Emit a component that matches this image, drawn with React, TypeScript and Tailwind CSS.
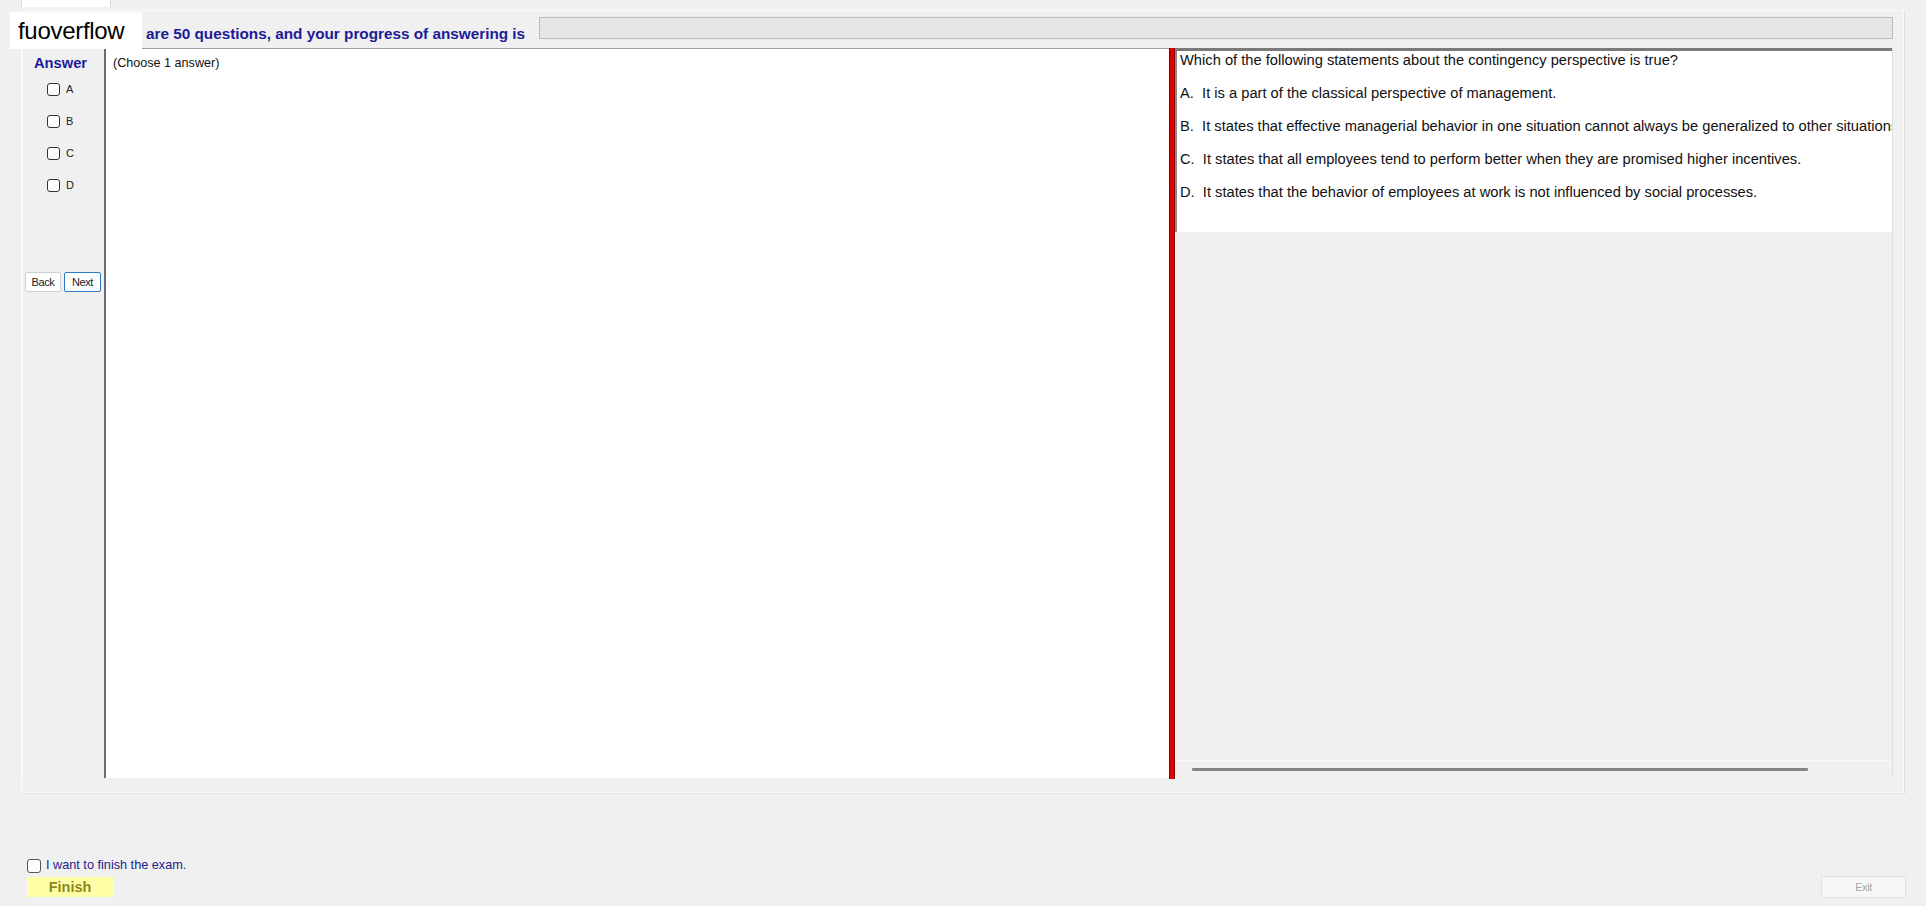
import React from "react";

const options = [
  "It is a part of the classical perspective of management.",
  "It states that effective managerial behavior in one situation cannot always be generalized to other situations.",
  "It states that all employees tend to perform better when they are promised higher incentives.",
  "It states that the behavior of employees at work is not influenced by social processes.",
];

const letters = ["A", "B", "C", "D"];

const Box: React.FC<{ className?: string }> = ({ className }) => (
  <span
    className={
      "inline-block w-[13px] h-[13px] rounded-[3px] border border-[#333] bg-white " +
      (className ?? "")
    }
  />
);

export default function App() {
  return (
    <div
      className="relative w-[1926px] h-[906px] overflow-hidden bg-[#f0f0f0] text-black"
      style={{ fontFamily: '"Liberation Sans", Arial, sans-serif' }}
    >
      {/* tab strip */}
      <div className="flex h-[10px]">
        <div className="ml-[21px] w-[90px] h-[7px] bg-white border-x border-[#dcdcdc]" />
      </div>

      {/* main frame */}
      <div className="ml-[21px] w-[1883px] h-[783px] border border-[#fafafa] shadow-[1px_1px_0_#e0e0e0] flex flex-col">
        <div className="h-[37px] flex items-start">
          <span className="ml-[124px] mt-[14px] text-[15.3px] leading-[17px] font-bold text-[#1c1c96]">
            are 50 questions, and your progress of answering is
          </span>
          <div className="ml-[14px] mr-[10px] mt-[6px] flex-1 h-[22px] bg-[#e6e6e6] border border-[#bcbcbc]" />
        </div>

        <div className="flex h-[730px]">
          {/* answer column */}
          <div className="w-[82px] flex flex-col border-l border-[#fafafa]">
            <div className="pl-[11px] pt-[7px] text-[14.7px] leading-[17px] font-bold text-[#1a1a9a]">Answer</div>
            <div className="flex flex-col gap-[19px] mt-[11px] pl-[24px]">
              {letters.map((l) => (
                <label key={l} className="flex items-center gap-[6px] text-[11px] text-[#222] h-[13px]">
                  <Box />
                  {l}
                </label>
              ))}
            </div>
            <div className="flex gap-[3px] mt-[80px] pl-[2px]">
              <button className="w-[36px] h-[20px] bg-white border border-[#cfcfcf] rounded-[2px] text-[11px] text-[#222] tracking-[-0.4px]">
                Back
              </button>
              <button className="w-[37px] h-[20px] bg-white border border-[#2a7bc4] rounded-[2px] text-[11px] text-[#222] tracking-[-0.4px]">
                Next
              </button>
            </div>
          </div>

          {/* left white panel */}
          <div className="w-[1065px] h-[730px] bg-white border-l-2 border-t border-[#6e6e6e] border-t-[#a0a0a0]">
            <div className="pl-[7px] pt-[5px] text-[12.6px] text-[#111]">(Choose 1 answer)</div>
          </div>

          {/* splitter */}
          <div className="w-[6px] h-[731px] bg-[#e00000] border-x border-[#8a0000]" />

          {/* right panel */}
          <div className="w-[718px] h-[730px] flex flex-col border-r border-[#e0e0e0]">
            <div className="h-[184px] bg-white border-t-[3px] border-[#7a7a7a] border-l-2 border-l-[#8a8a8a] overflow-hidden whitespace-nowrap pl-[3px] pt-[1px] text-[14.7px] text-[#111]">
              <div className="h-[25px] leading-[16px]">
                Which of the following statements about the contingency perspective is true?
              </div>
              {options.map((o, i) => (
                <div key={i} className="h-[33px] leading-[33px]">
                  {letters[i]}.&nbsp; {o}
                </div>
              ))}
            </div>
            <div className="flex-1 border-l border-[#fafafa]" />
            <div className="h-[18px] flex items-center border-t border-[#fafafa]">
              <div className="ml-[17px] w-[616px] h-[3px] bg-[#858585] rounded-[1px]" />
            </div>
          </div>
        </div>
      </div>

      {/* watermark */}
      <div className="absolute left-[10px] top-[12px] w-[132px] h-[37px] bg-white flex items-center pl-[8px] text-[24px] text-black tracking-[-0.3px]">
        fuoverflow
      </div>

      {/* bottom controls */}
      <div className="absolute left-[27px] top-[856px] flex flex-col gap-[2px]">
        <label className="flex items-center gap-[5px] text-[12.7px] text-[#1c1c8c]">
          <Box className="w-[14px] h-[14px] border-[#555]" />
          I want to finish the exam.
        </label>
        <button className="w-[86px] h-[20px] bg-[#ffffa8] text-[14.5px] font-bold text-[#8a8a1a] leading-[20px]">
          Finish
        </button>
      </div>

      <button className="absolute left-[1821px] top-[876px] w-[85px] h-[22px] bg-[#f6f6f6] border border-[#e2e2e2] text-[11px] text-[#a8a8a8] tracking-[-0.4px]">
        Exit
      </button>
    </div>
  );
}
